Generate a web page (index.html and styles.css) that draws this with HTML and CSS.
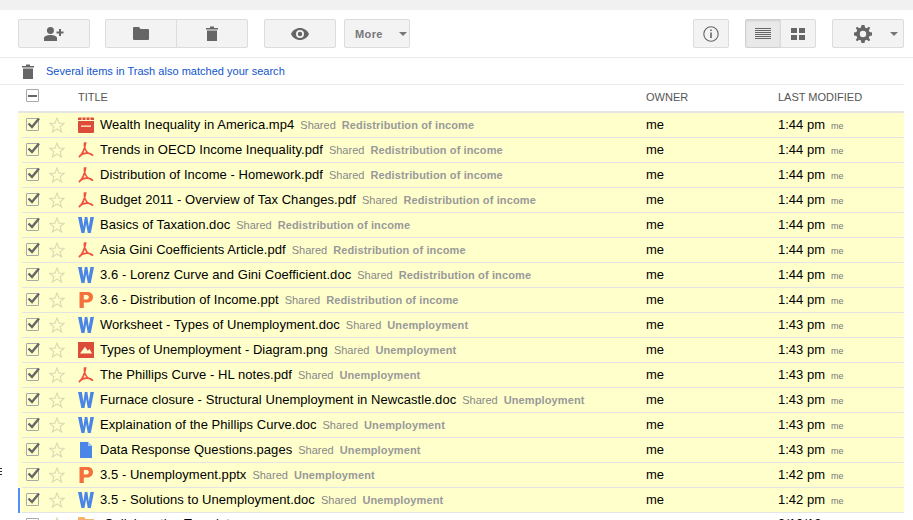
FILE: index.html
```html
<!DOCTYPE html>
<html lang="en">
<head>
    <meta charset="UTF-8">
    <title>Drive search results</title>
    <link rel="stylesheet" href="styles.css">
</head>
<body>
<svg class="defs" width="0" height="0">
    <symbol id="i-check" viewBox="0 0 14 14"><path d="M2.500 6.500 L6 10 L13 1.500" fill="none" stroke="#666" stroke-width="2.400"/></symbol>
    <symbol id="i-star" viewBox="0 0 16 16"><path d="M8 1 L10 6.100 L15.300 6.300 L11.100 9.700 L12.600 15 L8 12 L3.400 15 L4.900 9.700 L.7 6.300 L6 6.100 Z" fill="none" stroke="#dcdcb4" stroke-width="1.200"/></symbol>
    <symbol id="i-video" viewBox="0 0 16 16"><path d="M0 4 H16 V15 Q16 16 15 16 H1 Q0 16 0 15 Z M3 8.500 V9.700 H13 V8.500 Z M1 .5 H15 Q16 .5 16 1.500 V3 H0 V1.500 Q0 .5 1 .5 Z" fill="#dd4b39" fill-rule="evenodd"/><path d="M4 .5 V3 M8 .5 V3 M12 .5 V3" stroke="#ffffcc" stroke-width="1"/></symbol>
    <symbol id="i-pdf" viewBox="0 0 16 16"><path d="M6.600 1 C6 4 7 7.500 9 10 C10.500 11.500 13.500 12.800 15 13.500 C12 9.800 4.500 10.500 1 15 C3.500 13 6.500 8 7.600 1 Z" fill="none" stroke="#f1533f" stroke-width="1.700"/></symbol>
    <symbol id="i-word" viewBox="0 0 16 16"><path d="M0 0 H3.800 L5.400 9.800 L6.800 0 H9.400 L10.800 9.800 L12.400 0 H16 L12.800 16 H9.800 L8.100 7 L6.500 16 H3.400 Z" fill="#4a86e8"/></symbol>
    <symbol id="i-ppt" viewBox="0 0 16 16"><path d="M1.500 0 H9.500 C13.500 0 15 2.500 15 5 C15 8 13 10.500 9 10.500 H5.800 V16 H1.500 Z M5.800 3 V7.400 H8.800 C10.200 7.400 10.800 6.300 10.800 5.200 C10.800 4 10.200 3 8.800 3 Z" fill="#f4703c" fill-rule="evenodd"/></symbol>
    <symbol id="i-img" viewBox="0 0 16 16"><path d="M0 0 H16 V16 H0 Z M2 11.500 H14 L11.500 7 L9.800 8.800 L7 4.800 Z" fill="#dd4b39" fill-rule="evenodd"/></symbol>
    <symbol id="i-doc" viewBox="0 0 16 16"><path d="M2 0 H10 L14 4 V16 H2 Z" fill="#4a86e8"/><path d="M10 0 V4 H14 Z" fill="#a9c6f5"/></symbol>
    <symbol id="i-trash" viewBox="0 0 12 15"><path d="M0 2 H4 V.5 H8 V2 H12 V3.500 H0 Z M1 4.500 H11 V15 H1 Z" fill="#666"/></symbol>
</svg>

<div class="topband"></div>

<div class="toolbar">
    <button class="btn w72">
        <svg class="ico" width="20" height="14" viewBox="0 0 20 14"><path d="M6.500 0 A3.500 3.500 0 1 1 6.400 7 A3.500 3.500 0 1 1 6.500 0 Z M0 14 V11 C0 9 3.500 8 6.500 8 S13 9 13 11 V14 Z M15 2 H17 V4.500 H19.500 V6.500 H17 V9 H15 V6.500 H12.500 V4.500 H15 Z" fill="#666"/></svg>
    </button>
    <div class="group gap15">
        <button class="btn w72 first">
            <svg class="ico" width="16" height="13" viewBox="0 0 16 13"><path d="M0 1 Q0 0 1 0 H6 L7.500 2 H15 Q16 2 16 3 V12 Q16 13 15 13 H1 Q0 13 0 12 Z" fill="#666"/></svg>
        </button>
        <button class="btn w72 last">
            <svg class="ico" width="12" height="15"><use href="#i-trash"/></svg>
        </button>
    </div>
    <button class="btn w72 gap16">
        <svg class="ico" width="18" height="12" viewBox="0 0 18 12"><path d="M9 0 C13 0 16.500 2.500 18 6 C16.500 9.500 13 12 9 12 S1.500 9.500 0 6 C1.500 2.500 5 0 9 0 Z M9 2 A4 4 0 1 0 9 10 A4 4 0 1 0 9 2 Z M9 3.800 A2.200 2.200 0 1 1 9 8.200 A2.200 2.200 0 1 1 9 3.800 Z" fill="#666" fill-rule="evenodd"/></svg>
    </button>
    <button class="btn more">More<span class="caret"></span></button>

    <button class="btn info">
        <svg class="ico" width="16" height="16" viewBox="0 0 16 16"><circle cx="8" cy="8" r="7.200" fill="none" stroke="#666" stroke-width="1.100"/><path d="M7.200 3.500 H8.800 V5 H7.200 Z M7.200 6.500 H8.800 V12 H7.200 Z" fill="#666"/></svg>
    </button>
    <div class="group gap16">
        <button class="btn view first pressed">
            <svg class="ico" width="16" height="12" viewBox="0 0 16 12"><path d="M0 .5 H16 M0 2.500 H16 M0 4.500 H16 M0 6.500 H16 M0 8.500 H16 M0 10.500 H16" stroke="#666" stroke-width="1"/></svg>
        </button>
        <button class="btn view last">
            <svg class="ico" width="14" height="12" viewBox="0 0 14 12"><path d="M0 0 H6 V5 H0 Z M8 0 H14 V5 H8 Z M0 7 H6 V12 H0 Z M8 7 H14 V12 H8 Z" fill="#666"/></svg>
        </button>
    </div>
    <button class="btn w72 gap16 settings">
        <svg class="ico" width="18" height="18" viewBox="0 0 18 18"><path d="M7.500 0 H10.500 L11 2.400 L12.800 3.200 L14.900 1.800 L16.200 3.100 L14.800 5.200 L15.600 7 L18 7.500 V10.500 L15.600 11 L14.800 12.800 L16.200 14.900 L14.900 16.200 L12.800 14.800 L11 15.600 L10.500 18 H7.500 L7 15.600 L5.200 14.800 L3.100 16.200 L1.800 14.900 L3.200 12.800 L2.400 11 L0 10.500 V7.500 L2.400 7 L3.200 5.200 L1.800 3.100 L3.100 1.800 L5.200 3.200 L7 2.400 Z M9 5.800 A3.200 3.200 0 1 0 9 12.200 A3.200 3.200 0 1 0 9 5.800 Z" fill="#666" fill-rule="evenodd"/></svg>
        <span class="caret"></span>
    </button>
</div>

<div class="notice">
    <svg class="ico" width="12" height="15"><use href="#i-trash"/></svg>
    <a class="notice-link">Several items in Trash also matched your search</a>
</div>

<div class="list">
    <div class="head">
        <span class="col-check"><span class="box minus"></span></span>
        <span class="col-title">TITLE</span>
        <span class="col-owner">OWNER</span>
        <span class="col-date">LAST MODIFIED</span>
    </div>

    <div class="row"><span class="col-check"><span class="box"><svg width="14" height="14"><use href="#i-check"/></svg></span><svg class="star" width="16" height="16"><use href="#i-star"/></svg></span><span class="col-title"><svg class="type" width="16" height="16"><use href="#i-video"/></svg><span class="name">Wealth Inequality in America.mp4</span><span class="shared">Shared</span><span class="label">Redistribution of income</span></span><span class="col-owner">me</span><span class="col-date">1:44 pm<small>me</small></span></div>
    <div class="row"><span class="col-check"><span class="box"><svg width="14" height="14"><use href="#i-check"/></svg></span><svg class="star" width="16" height="16"><use href="#i-star"/></svg></span><span class="col-title"><svg class="type" width="16" height="16"><use href="#i-pdf"/></svg><span class="name">Trends in OECD Income Inequality.pdf</span><span class="shared">Shared</span><span class="label">Redistribution of income</span></span><span class="col-owner">me</span><span class="col-date">1:44 pm<small>me</small></span></div>
    <div class="row"><span class="col-check"><span class="box"><svg width="14" height="14"><use href="#i-check"/></svg></span><svg class="star" width="16" height="16"><use href="#i-star"/></svg></span><span class="col-title"><svg class="type" width="16" height="16"><use href="#i-pdf"/></svg><span class="name">Distribution of Income - Homework.pdf</span><span class="shared">Shared</span><span class="label">Redistribution of income</span></span><span class="col-owner">me</span><span class="col-date">1:44 pm<small>me</small></span></div>
    <div class="row"><span class="col-check"><span class="box"><svg width="14" height="14"><use href="#i-check"/></svg></span><svg class="star" width="16" height="16"><use href="#i-star"/></svg></span><span class="col-title"><svg class="type" width="16" height="16"><use href="#i-pdf"/></svg><span class="name">Budget 2011 - Overview of Tax Changes.pdf</span><span class="shared">Shared</span><span class="label">Redistribution of income</span></span><span class="col-owner">me</span><span class="col-date">1:44 pm<small>me</small></span></div>
    <div class="row"><span class="col-check"><span class="box"><svg width="14" height="14"><use href="#i-check"/></svg></span><svg class="star" width="16" height="16"><use href="#i-star"/></svg></span><span class="col-title"><svg class="type" width="16" height="16"><use href="#i-word"/></svg><span class="name">Basics of Taxation.doc</span><span class="shared">Shared</span><span class="label">Redistribution of income</span></span><span class="col-owner">me</span><span class="col-date">1:44 pm<small>me</small></span></div>
    <div class="row"><span class="col-check"><span class="box"><svg width="14" height="14"><use href="#i-check"/></svg></span><svg class="star" width="16" height="16"><use href="#i-star"/></svg></span><span class="col-title"><svg class="type" width="16" height="16"><use href="#i-pdf"/></svg><span class="name">Asia Gini Coefficients Article.pdf</span><span class="shared">Shared</span><span class="label">Redistribution of income</span></span><span class="col-owner">me</span><span class="col-date">1:44 pm<small>me</small></span></div>
    <div class="row"><span class="col-check"><span class="box"><svg width="14" height="14"><use href="#i-check"/></svg></span><svg class="star" width="16" height="16"><use href="#i-star"/></svg></span><span class="col-title"><svg class="type" width="16" height="16"><use href="#i-word"/></svg><span class="name">3.6 - Lorenz Curve and Gini Coefficient.doc</span><span class="shared">Shared</span><span class="label">Redistribution of income</span></span><span class="col-owner">me</span><span class="col-date">1:44 pm<small>me</small></span></div>
    <div class="row"><span class="col-check"><span class="box"><svg width="14" height="14"><use href="#i-check"/></svg></span><svg class="star" width="16" height="16"><use href="#i-star"/></svg></span><span class="col-title"><svg class="type" width="16" height="16"><use href="#i-ppt"/></svg><span class="name">3.6 - Distribution of Income.ppt</span><span class="shared">Shared</span><span class="label">Redistribution of income</span></span><span class="col-owner">me</span><span class="col-date">1:44 pm<small>me</small></span></div>
    <div class="row"><span class="col-check"><span class="box"><svg width="14" height="14"><use href="#i-check"/></svg></span><svg class="star" width="16" height="16"><use href="#i-star"/></svg></span><span class="col-title"><svg class="type" width="16" height="16"><use href="#i-word"/></svg><span class="name">Worksheet - Types of Unemployment.doc</span><span class="shared">Shared</span><span class="label">Unemployment</span></span><span class="col-owner">me</span><span class="col-date">1:43 pm<small>me</small></span></div>
    <div class="row"><span class="col-check"><span class="box"><svg width="14" height="14"><use href="#i-check"/></svg></span><svg class="star" width="16" height="16"><use href="#i-star"/></svg></span><span class="col-title"><svg class="type" width="16" height="16"><use href="#i-img"/></svg><span class="name">Types of Unemployment - Diagram.png</span><span class="shared">Shared</span><span class="label">Unemployment</span></span><span class="col-owner">me</span><span class="col-date">1:43 pm<small>me</small></span></div>
    <div class="row"><span class="col-check"><span class="box"><svg width="14" height="14"><use href="#i-check"/></svg></span><svg class="star" width="16" height="16"><use href="#i-star"/></svg></span><span class="col-title"><svg class="type" width="16" height="16"><use href="#i-pdf"/></svg><span class="name">The Phillips Curve - HL notes.pdf</span><span class="shared">Shared</span><span class="label">Unemployment</span></span><span class="col-owner">me</span><span class="col-date">1:43 pm<small>me</small></span></div>
    <div class="row"><span class="col-check"><span class="box"><svg width="14" height="14"><use href="#i-check"/></svg></span><svg class="star" width="16" height="16"><use href="#i-star"/></svg></span><span class="col-title"><svg class="type" width="16" height="16"><use href="#i-word"/></svg><span class="name">Furnace closure - Structural Unemployment in Newcastle.doc</span><span class="shared">Shared</span><span class="label">Unemployment</span></span><span class="col-owner">me</span><span class="col-date">1:43 pm<small>me</small></span></div>
    <div class="row"><span class="col-check"><span class="box"><svg width="14" height="14"><use href="#i-check"/></svg></span><svg class="star" width="16" height="16"><use href="#i-star"/></svg></span><span class="col-title"><svg class="type" width="16" height="16"><use href="#i-word"/></svg><span class="name">Explaination of the Phillips Curve.doc</span><span class="shared">Shared</span><span class="label">Unemployment</span></span><span class="col-owner">me</span><span class="col-date">1:43 pm<small>me</small></span></div>
    <div class="row"><span class="col-check"><span class="box"><svg width="14" height="14"><use href="#i-check"/></svg></span><svg class="star" width="16" height="16"><use href="#i-star"/></svg></span><span class="col-title"><svg class="type" width="16" height="16"><use href="#i-doc"/></svg><span class="name">Data Response Questions.pages</span><span class="shared">Shared</span><span class="label">Unemployment</span></span><span class="col-owner">me</span><span class="col-date">1:43 pm<small>me</small></span></div>
    <div class="row"><span class="col-check"><span class="box"><svg width="14" height="14"><use href="#i-check"/></svg></span><svg class="star" width="16" height="16"><use href="#i-star"/></svg></span><span class="col-title"><svg class="type" width="16" height="16"><use href="#i-ppt"/></svg><span class="name">3.5 - Unemployment.pptx</span><span class="shared">Shared</span><span class="label">Unemployment</span></span><span class="col-owner">me</span><span class="col-date">1:42 pm<small>me</small></span></div>
    <div class="row current"><span class="col-check"><span class="box"><svg width="14" height="14"><use href="#i-check"/></svg></span><svg class="star" width="16" height="16"><use href="#i-star"/></svg></span><span class="col-title"><svg class="type" width="16" height="16"><use href="#i-word"/></svg><span class="name">3.5 - Solutions to Unemployment.doc</span><span class="shared">Shared</span><span class="label">Unemployment</span></span><span class="col-owner">me</span><span class="col-date">1:42 pm<small>me</small></span></div>
    <div class="row plain"><span class="col-check"><span class="box"></span><svg class="star" width="16" height="16"><use href="#i-star"/></svg></span><span class="col-title"><svg class="type" width="16" height="13" viewBox="0 0 16 13"><path d="M0 1 Q0 0 1 0 H6 L7.500 2 H15 Q16 2 16 3 V12 Q16 13 15 13 H1 Q0 13 0 12 Z" fill="#f6b26b"/></svg><span class="name folder-name">Collaborative Template</span></span><span class="col-owner"></span><span class="col-date">9/10/13</span></div>
</div>

<div class="handle"></div>
</body>
</html>
```

FILE: styles.css
```css
* {
    box-sizing: border-box;
}
html, body {
    height: 520px;
    overflow: hidden;
}
body {
    margin: 0;
    background-color: white;
    color: #000;
    font-family: "Liberation Sans", Arial, sans-serif;
    font-size: 13px;
}
.defs {
    position: absolute;
}
.topband {
    height: 10px;
    background-color: #f1f1f1;
}

/* toolbar */
.toolbar {
    display: flex;
    align-items: flex-start;
    height: 48px;
    padding: 9px 9px 0 18px;
    border-bottom: 1px solid #ebebeb;
}
.btn {
    display: flex;
    align-items: center;
    justify-content: center;
    height: 29px;
    padding: 0;
    background-color: #f3f3f3;
    border: 1px solid #dcdcdc;
    border-radius: 2px;
    font-family: inherit;
}
.w72 {
    width: 72px;
}
.group {
    display: flex;
}
.first {
    border-radius: 2px 0 0 2px;
}
.last {
    margin-left: -1px;
    border-radius: 0 2px 2px 0;
}
.gap15 {
    margin-left: 15px;
}
.gap16 {
    margin-left: 16px;
}
.more {
    width: 66px;
    margin-left: 8px;
    justify-content: flex-start;
    padding-left: 10px;
    font-size: 11px;
    font-weight: bold;
    color: #777;
    letter-spacing: .4px;
}
.caret {
    width: 0;
    height: 0;
    margin-left: 16px;
    border-left: 4px solid transparent;
    border-right: 4px solid transparent;
    border-top: 4px solid #777;
}
.info {
    width: 36px;
    margin-left: auto;
}
.view {
    width: 36px;
}
.pressed {
    background-color: #e9e9e9;
    border-color: #d0d0d0;
    box-shadow: inset 0 1px 2px rgba(0, 0, 0, .1);
}
.settings {
    justify-content: flex-start;
    padding-left: 21px;
}
.settings .caret {
    margin-left: 18px;
}

/* trash notice */
.notice {
    display: flex;
    align-items: center;
    height: 27px;
    margin-right: 9px;
    padding: 0 0 0 22px;
    border-bottom: 1px solid #ebebeb;
}
.notice-link {
    margin-left: 12px;
    color: #1155cc;
    font-size: 11px;
    letter-spacing: .02px;
}

/* file list */
.list {
    margin: 0 9px 0 18px;
}
.head {
    display: flex;
    align-items: center;
    height: 28px;
    padding-bottom: 2px;
    border-bottom: 2px solid #e5e5e5;
    color: #555;
    font-size: 11px;
}
.head .box {
    margin-top: -3px;
}
.row {
    display: flex;
    align-items: center;
    height: 25px;
    padding-bottom: 2px;
    background-color: #ffffcc;
    position: relative;
}
.row::after {
    content: "";
    position: absolute;
    left: 4px;
    right: 0;
    bottom: 0;
    height: 1px;
    background-color: #e4e4e4;
}
.row.current {
    box-shadow: inset 2px 0 0 #4d90fe;
}
.row.plain {
    background-color: white;
}
.row.plain::after {
    display: none;
}
.row.plain .col-title, .row.plain .col-date {
    margin-top: -2px;
}
.col-check {
    display: flex;
    align-items: center;
    width: 60px;
    padding-left: 8px;
    flex-shrink: 0;
}
.col-title {
    display: flex;
    align-items: center;
    width: 568px;
    white-space: nowrap;
}
.col-owner {
    width: 132px;
}
.col-date {
    white-space: nowrap;
}
.box {
    display: flex;
    align-items: center;
    justify-content: center;
    width: 13px;
    height: 13px;
    background-color: transparent;
    border: 1px solid #a8a8a8;
    border-radius: 1px;
}
.minus::before {
    content: "";
    width: 9px;
    height: 2px;
    background-color: #666;
}
.box svg {
    flex-shrink: 0;
    margin: -2px -1px 0 0;
}
.star {
    margin-left: 10px;
}
.type {
    flex-shrink: 0;
}
.name {
    margin-left: 6px;
    font-size: 13px;
    letter-spacing: .05px;
}
.folder-name {
    margin-left: 10px;
}
.shared {
    margin-left: 6px;
    color: #888;
    font-size: 11px;
}
.label {
    margin-left: 6px;
    color: #999;
    font-size: 11px;
    font-weight: bold;
    letter-spacing: .12px;
}
.col-date small {
    margin-left: 6px;
    color: #777;
    font-size: 9px;
}
.handle {
    position: absolute;
    left: 0;
    top: 468px;
    width: 2px;
    height: 9px;
    background: repeating-linear-gradient(#333 0 1px, transparent 1px 3px);
}
```
